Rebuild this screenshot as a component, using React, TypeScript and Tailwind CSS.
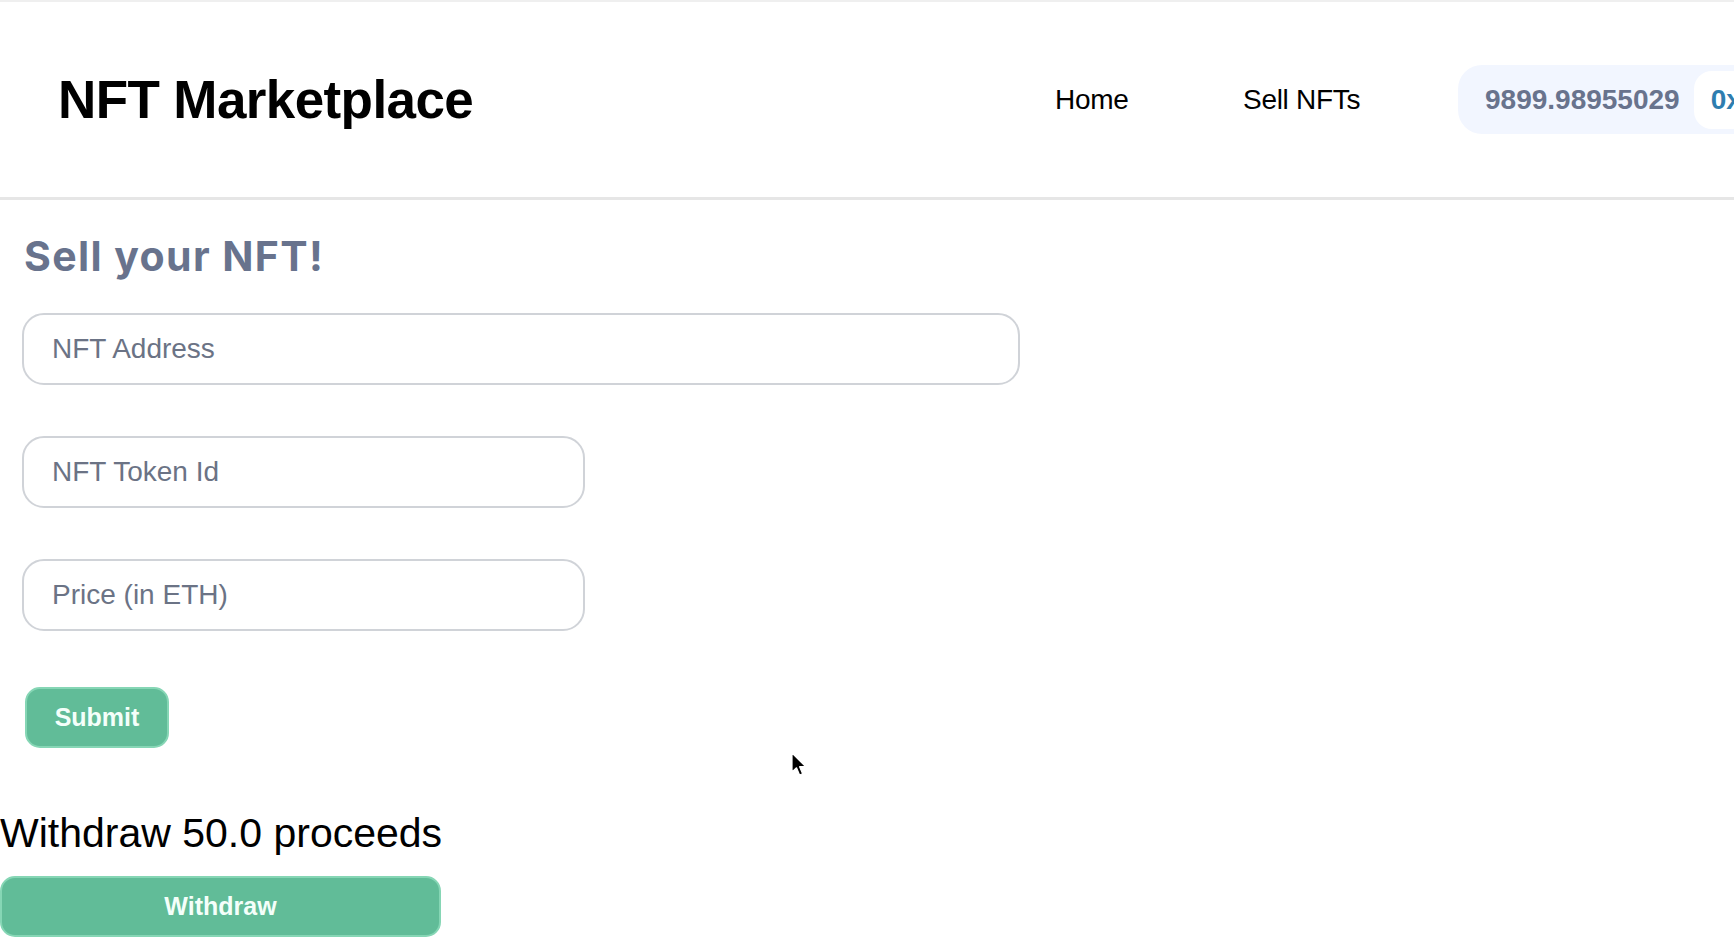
import React from "react";

function Cursor() {
  return (
    <svg
      className="absolute left-[790px] top-[750px]"
      width="18"
      height="26"
      viewBox="0 0 18 26"
    >
      <path
        d="M2 1 L2 20 L6.5 15.8 L9.6 23 L12.6 21.7 L9.6 14.7 L15.6 14.7 Z"
        fill="#000"
        stroke="#fff"
        strokeWidth="1.2"
        strokeLinejoin="round"
      />
    </svg>
  );
}

export default function App() {
  return (
    <div className="relative min-h-screen overflow-hidden bg-white border-t-2 border-[#efefef] font-['Liberation_Sans',Arial,sans-serif]">
      <header className="flex h-[198px] items-center border-b-[3px] border-[#e6e6e6] overflow-hidden">
        <div className="w-[1055px] shrink-0 pl-[58px]">
          <h1 className="text-[53px] font-bold tracking-[-0.6px] text-black leading-none">
            NFT Marketplace
          </h1>
        </div>
        <nav className="flex shrink-0 items-center">
          <a className="w-[188px] text-[28px] tracking-[-0.3px] text-black">Home</a>
          <a className="w-[215px] text-[28px] tracking-[-0.3px] text-black">Sell NFTs</a>
          <div className="flex h-[69px] shrink-0 items-center rounded-[24px] bg-[#f2f6ff] pl-[27px] pr-[6px]">
            <span className="text-[28px] font-bold text-[#68738d]">9899.98955029</span>
            <div className="ml-[14px] flex h-[58px] items-center rounded-[18px] bg-white px-[17px]">
              <span className="text-[28px] font-bold text-[#2e7daf]">0x</span>
            </div>
          </div>
        </nav>
      </header>

      <main>
        <div className="flex flex-col items-start pl-[22px]">
          <h2 className="mt-[32px] h-[48px] font-['Inter',sans-serif] text-[41px] font-bold leading-[48px] tracking-[1.4px] text-[#68738d] pl-[2px]">
            Sell your NFT!
          </h2>
          <input
            className="mt-[33px] h-[72px] w-[998px] rounded-[22px] border-2 border-[#d0d3d8] pl-[28px] text-[28px] outline-none placeholder:text-[#6b7385]"
            placeholder="NFT Address"
          />
          <input
            className="mt-[51px] h-[72px] w-[563px] rounded-[22px] border-2 border-[#d0d3d8] pl-[28px] text-[28px] outline-none placeholder:text-[#6b7385]"
            placeholder="NFT Token Id"
          />
          <input
            className="mt-[51px] h-[72px] w-[563px] rounded-[22px] border-2 border-[#d0d3d8] pl-[28px] text-[28px] outline-none placeholder:text-[#6b7385]"
            placeholder="Price (in ETH)"
          />
          <button className="ml-[3px] mt-[56px] flex h-[61px] w-[144px] items-center justify-center rounded-[15px] border-2 border-[#86d6b5] bg-[#61bc98] text-[25px] font-bold text-[#f4fffa]">
            Submit
          </button>
        </div>
        <div className="mt-[62px] h-[46px] text-[41px] leading-[46px] text-black">
          Withdraw 50.0 proceeds
        </div>
        <button className="mt-[20px] flex h-[61px] w-[441px] items-center justify-center rounded-[15px] border-2 border-[#86d6b5] bg-[#61bc98] text-[25px] font-bold text-[#f4fffa]">
          Withdraw
        </button>
      </main>
      <Cursor />
    </div>
  );
}
